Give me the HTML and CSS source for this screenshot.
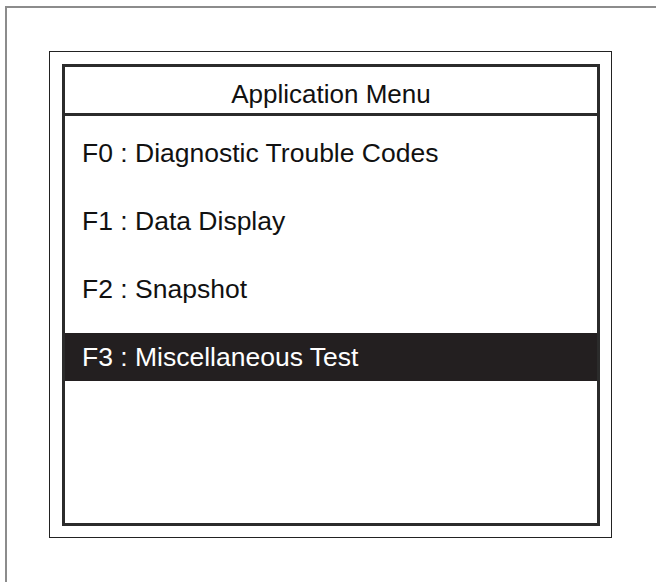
FILE: index.html
```html
<html lang="en">
<head>
  <meta charset="UTF-8">
  <meta name="viewport" content="width=device-width, initial-scale=1.0">
  <title>Application Menu</title>
  <link rel="stylesheet" href="styles.css">
</head>
<body>
  <div class="page">
    <div class="frame">
      <div class="screen">
        <div class="title">Application Menu</div>
        <ul class="menu">
          <li>F0 : Diagnostic Trouble Codes</li>
          <li>F1 : Data Display</li>
          <li>F2 : Snapshot</li>
          <li class="selected">F3 : Miscellaneous Test</li>
        </ul>
      </div>
    </div>
  </div>
</body>
</html>
```

FILE: styles.css
```css
body {
  margin: 0;
  background: white;
  font-family: "Liberation Sans", Arial, sans-serif;
  color: #111;
  overflow: hidden;
}
.page {
  margin: 6px 0 0 5px;
  border-top: 2px solid #8c8c8c;
  border-left: 2px solid #8c8c8c;
  height: 531px;
  padding: 43px 0 0 42px;
}
.frame {
  width: 563px;
  height: 487px;
  box-sizing: border-box;
  border: 1px solid #222;
  padding: 12px 11px 11px 12px;
}
.screen {
  width: 538px;
  height: 462px;
  box-sizing: border-box;
  border: 3px solid #2b2b2b;
}
.title {
  height: 49px;
  box-sizing: border-box;
  padding-top: 5px;
  line-height: 44px;
  font-size: 26px;
  text-align: center;
  border-bottom: 3px solid #2b2b2b;
}
.menu {
  list-style: none;
  margin: 0;
  padding: 13px 0 0 0;
}
.menu li {
  height: 48px;
  line-height: 48px;
  font-size: 26.5px;
  padding-left: 17px;
  margin-bottom: 20px;
}
.menu li.selected {
  background: #231f20;
  color: white;
}
```
